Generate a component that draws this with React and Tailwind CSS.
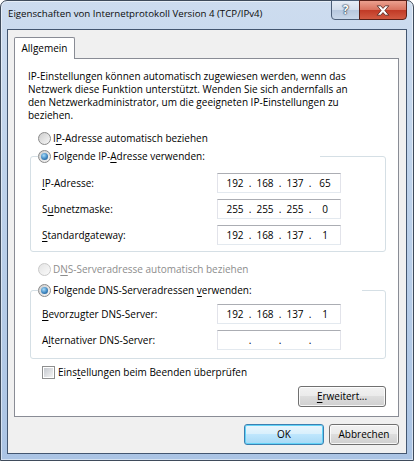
import React from "react";

const font = "font-['Open_Sans','Noto_Sans',sans-serif]";

// Unterstrichener Zugriffsbuchstabe
function Key({ children }) {
  return <span className="underline decoration-1 underline-offset-[1.5px]">{children}</span>;
}

function Radio({ checked = false, disabled = false }) {
  return (
    <span
      className={`flex h-[13px] w-[13px] shrink-0 items-center justify-center rounded-full border ${
        disabled
          ? "border-[#c9c9c9] bg-[linear-gradient(135deg,#e4e4e4,#fafafa)]"
          : "border-[#8a8a8a] bg-[linear-gradient(135deg,#cdcdcd,#f7f7f7)]"
      }`}
    >
      {checked && (
        <span className="h-[7px] w-[7px] rounded-full bg-[radial-gradient(circle_at_40%_35%,#a8ddfb_0%,#3f86c0_55%,#1b4f80_100%)]" />
      )}
    </span>
  );
}

function RadioRow({ checked, disabled, children }) {
  return (
    <div className={`flex h-[15px] items-center gap-[2px] ${disabled ? "text-[#8d8d8d]" : "text-black"}`}>
      <Radio checked={checked} disabled={disabled} />
      <span className="whitespace-nowrap">{children}</span>
    </div>
  );
}

// IP-Eingabefeld mit vier Oktetten
function IpField({ parts }) {
  return (
    <div className="flex h-[20px] w-[124px] items-center border border-[#abadb3] border-x-[#e2e3ea] border-b-[#e3e9ef] bg-white pl-[5px]">
      {parts.map((p, i) => (
        <React.Fragment key={i}>
          {i > 0 && <span className="w-[6px] text-center">.</span>}
          <span className="w-[24px] text-center">{p}</span>
        </React.Fragment>
      ))}
    </div>
  );
}

function Field({ label, parts }) {
  return (
    <div className="flex h-[20px] items-center">
      <span className="flex-1 whitespace-nowrap">{label}</span>
      <IpField parts={parts} />
    </div>
  );
}

function Group({ legendClass, header, className = "", children }) {
  return (
    <fieldset className={`ml-[15px] w-[356px] rounded-[3px] border border-[#d5dfe5] ${className}`}>
      <legend className={`ml-[7px] ${legendClass}`}>{header}</legend>
      {children}
    </fieldset>
  );
}

function Button({ primary = false, className = "", children }) {
  return (
    <button
      type="button"
      className={`flex h-[21px] items-center justify-center rounded-[3px] border ${
        primary
          ? "border-[#3c7fb1] bg-[linear-gradient(180deg,#eaf6fd_0%,#d9f0fc_45%,#bee6fd_50%,#a7d9f5_100%)] shadow-[inset_0_0_0_1px_#62d3f7]"
          : "border-[#707070] bg-[linear-gradient(180deg,#f2f2f2_0%,#ebebeb_45%,#dddddd_50%,#cfcfcf_100%)] shadow-[inset_0_0_0_1px_rgba(255,255,255,0.8)]"
      } ${className}`}
    >
      {children}
    </button>
  );
}

export default function App() {
  return (
    <div
      className={`${font} flex h-[461px] w-[414px] flex-col rounded-t-[7px] border border-[#3f4b5b] bg-[linear-gradient(180deg,#cddcef_0%,#bfd3eb_35%,#abc4e4_100%)] px-[6px] pb-[6px] text-[10px] text-black shadow-[inset_0_0_0_1px_rgba(255,255,255,0.5)]`}
    >
      {/* Titelleiste */}
      <div className="flex h-[28px] shrink-0 items-start justify-between">
        <span className="mt-[5px] whitespace-nowrap pl-[1px] text-[9.7px] leading-[15px] text-[#0b0b0b]">
          Eigenschaften von Internetprotokoll Version 4 (TCP/IPv4)
        </span>
        <div className="-mt-px flex">
          <div className="flex h-[20px] w-[29px] items-center justify-center rounded-bl-[4px] border border-[#4c5f78] bg-[linear-gradient(180deg,#e6edf6_0%,#d3deec_48%,#b7c8de_52%,#c9d8ea_100%)] text-[12px] font-bold text-white [text-shadow:0_0_1px_#26364c,0_0_1px_#26364c,0_0_2px_#26364c]">
            ?
          </div>
          <div className="-ml-px flex h-[20px] w-[48px] items-center justify-center rounded-br-[4px] border border-[#5a1f17] bg-[linear-gradient(180deg,#eba08f_0%,#d9735f_48%,#c13a26_52%,#d25a42_100%)]">
            <svg width="14" height="11" viewBox="0 0 14 11">
              <path
                d="M1.2 0.8h3.5L7 3.4 9.3 0.8h3.5L8.9 5.5l3.9 4.7H9.3L7 7.6 4.7 10.2H1.2l3.9-4.7z"
                fill="#fff"
                stroke="#4a1f1a"
                strokeWidth="0.8"
                strokeLinejoin="round"
              />
            </svg>
          </div>
        </div>
      </div>

      {/* Dialoginhalt */}
      <div className="flex h-[425px] flex-col border border-[#435670] bg-[#f0f0f0] pb-[8px] pl-[6px] pr-[7px] pt-[7px]">
        <div className="relative z-10 -mb-px flex h-[22px] w-[61px] items-center justify-center rounded-t-[2px] border border-b-0 border-[#898c95] bg-white">
          Allgemein
        </div>

        <div className="flex h-[359px] flex-col border border-[#898c95] bg-white pt-[11px]">
          <p className="whitespace-nowrap pl-[13px] leading-[13px]">
            IP-Einstellungen können automatisch zugewiesen werden, wenn das
            <br />
            Netzwerk diese Funktion unterstützt. Wenden Sie sich andernfalls an
            <br />
            den Netzwerkadministrator, um die geeigneten IP-Einstellungen zu
            <br />
            beziehen.
          </p>

          <div className="mt-[9px] pl-[23px]">
            <RadioRow>
              I<Key>P</Key>-Adresse automatisch beziehen
            </RadioRow>
          </div>

          <Group
            className="mt-[3px]"
            legendClass="w-[282px]"
            header={
              <RadioRow checked>
                Folgende IP-<Key>A</Key>dresse verwenden:
              </RadioRow>
            }
          >
            <div className="flex flex-col gap-[6px] pb-[6px] pl-[11px] pr-[44px] pt-[9px]">
              <Field label={<><Key>I</Key>P-Adresse:</>} parts={["192", "168", "137", "65"]} />
              <Field label={<>S<Key>u</Key>bnetzmaske:</>} parts={["255", "255", "255", "0"]} />
              <Field label={<><Key>S</Key>tandardgateway:</>} parts={["192", "168", "137", "1"]} />
            </div>
          </Group>

          <div className="mt-[10px] pl-[23px]">
            <RadioRow disabled>
              D<Key>N</Key>S-Serveradresse automatisch beziehen
            </RadioRow>
          </div>

          <Group
            className="mt-[6px]"
            legendClass="w-[324px]"
            header={
              <RadioRow checked>
                Folgende DNS-Serveradressen <Key>v</Key>erwenden:
              </RadioRow>
            }
          >
            <div className="flex flex-col gap-[6px] pb-[8px] pl-[11px] pr-[44px] pt-[6px]">
              <Field label={<><Key>B</Key>evorzugter DNS-Server:</>} parts={["192", "168", "137", "1"]} />
              <Field label={<>A<Key>l</Key>ternativer DNS-Server:</>} parts={["", "", "", ""]} />
            </div>
          </Group>

          <div className="mt-[6px] flex h-[15px] items-center gap-[3px] pl-[27px]">
            <span className="flex h-[13px] w-[13px] items-center justify-center border border-[#8e8f8f] bg-white">
              <span className="h-[9px] w-[9px] bg-[linear-gradient(135deg,#c5c9cf,#f4f4f4)]" />
            </span>
            <span>
              Eins<Key>t</Key>ellungen beim Beenden überprüfen
            </span>
          </div>

          <Button className="mr-[12px] mt-[6px] w-[88px] self-end">
            <Key>E</Key>rweitert...
          </Button>
        </div>

        <div className="mt-[7px] flex justify-end gap-[5px]">
          <Button primary className="w-[80px]">
            OK
          </Button>
          <Button className="w-[70px]">Abbrechen</Button>
        </div>
      </div>
    </div>
  );
}
